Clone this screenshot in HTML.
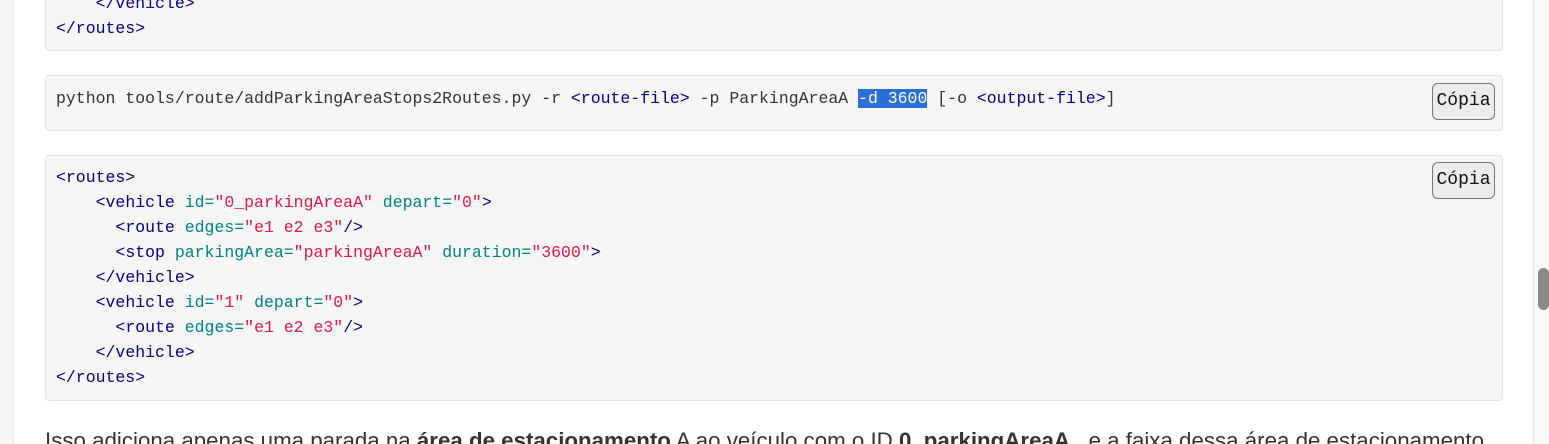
<!DOCTYPE html>
<html style="overflow:hidden;height:444px"><head><meta charset="utf-8"><style>
body{margin:0;width:1549px;height:444px;overflow:hidden;background:#fff;position:relative;font-family:"Liberation Sans",sans-serif}
.side{position:absolute;left:0;top:0;width:13px;height:444px;background:#f7f7f7;border-right:1px solid #eee}
.track{position:absolute;left:1533px;top:0;width:16px;height:444px;background:#f9f9f9;border-left:1px solid #e6e6e6}
.thumb{position:absolute;left:1538px;top:268px;width:11px;height:42px;background:#8a8a8a;border-radius:6px}
.box{position:absolute;left:45px;width:1458px;background:#f6f6f6;border:1px solid #e3e3e3;border-radius:4px;box-sizing:border-box}
pre{margin:0;font-family:"Liberation Mono",monospace;font-size:16.5px;line-height:25px;color:#333;position:absolute;left:10px;white-space:pre}
.t{color:#000080}.a{color:#008080}.s{color:#dc1a4a}
.hl{background:#2b6fd6;color:#fff}
.btn{position:absolute;left:1386px;width:63px;height:37px;box-sizing:border-box;border:1px solid #777;border-radius:6px;background:#ececec;font-family:"Liberation Mono",monospace;font-size:18px;color:#111;text-align:center;line-height:35px}
p{position:absolute;left:45px;top:428px;margin:0;font-size:22.3px;line-height:26px;color:#333;white-space:nowrap}
</style></head><body>
<div class="side"></div>
<div class="box" style="top:-10px;height:61px"><pre style="top:0px">    <span class="t">&lt;/vehicle&gt;</span>
<span class="t">&lt;/routes&gt;</span></pre></div>
<div class="box" style="top:75px;height:56px"><pre style="top:10px">python tools/route/addParkingAreaStops2Routes.py -r <span class="t">&lt;route-file&gt;</span> -p ParkingAreaA <span class="hl">-d 3600</span> [-o <span class="t">&lt;output-file&gt;</span>]</pre><div class="btn" style="top:7px">Cópia</div></div>
<div class="box" style="top:155px;height:246px"><pre style="top:9px"><span class="t">&lt;routes&gt;</span>
    <span class="t">&lt;vehicle</span> <span class="a">id=</span><span class="s">"0_parkingAreaA"</span> <span class="a">depart=</span><span class="s">"0"</span><span class="t">&gt;</span>
      <span class="t">&lt;route</span> <span class="a">edges=</span><span class="s">"e1 e2 e3"</span><span class="t">/&gt;</span>
      <span class="t">&lt;stop</span> <span class="a">parkingArea=</span><span class="s">"parkingAreaA"</span> <span class="a">duration=</span><span class="s">"3600"</span><span class="t">&gt;</span>
    <span class="t">&lt;/vehicle&gt;</span>
    <span class="t">&lt;vehicle</span> <span class="a">id=</span><span class="s">"1"</span> <span class="a">depart=</span><span class="s">"0"</span><span class="t">&gt;</span>
      <span class="t">&lt;route</span> <span class="a">edges=</span><span class="s">"e1 e2 e3"</span><span class="t">/&gt;</span>
    <span class="t">&lt;/vehicle&gt;</span>
<span class="t">&lt;/routes&gt;</span></pre><div class="btn" style="top:6px">Cópia</div></div>
<p>Isso adiciona apenas uma parada na <b>área de estacionamento</b> A ao veículo com o ID <b>0_parkingAreaA</b> , e a faixa dessa área de estacionamento</p>
<div class="track"></div><div class="thumb"></div>
</body></html>
